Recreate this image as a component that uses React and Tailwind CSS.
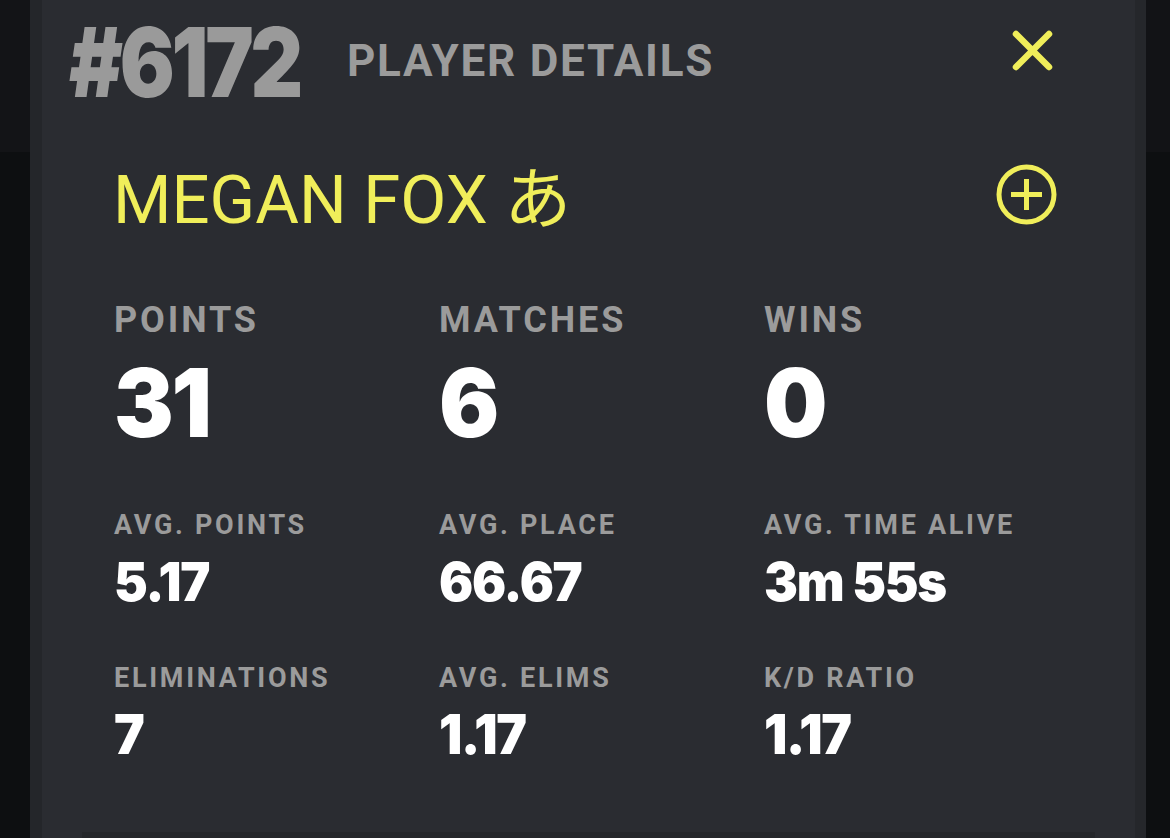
import React from 'react'

// player stats shown in the three-column grid
const STATS = [
  { label: 'POINTS', value: '31' },
  { label: 'MATCHES', value: '6' },
  { label: 'WINS', value: '0' },
  { label: 'AVG. POINTS', value: '5.17' },
  { label: 'AVG. PLACE', value: '66.67' },
  { label: 'AVG. TIME ALIVE', value: '3m 55s' },
  { label: 'ELIMINATIONS', value: '7' },
  { label: 'AVG. ELIMS', value: '1.17' },
  { label: 'K/D RATIO', value: '1.17' },
]

const roboto = "font-['Roboto','Liberation_Sans',sans-serif]"
const heavy = "font-['Inter','Roboto',sans-serif] font-black"

function CloseIcon() {
  return (
    <svg width="41" height="41" viewBox="0 0 41 41" fill="none">
      <path d="M4 4L37 37M37 4L4 37" stroke="#f0ee5a" strokeWidth="6.5" strokeLinecap="round" />
    </svg>
  )
}

function PlusCircleIcon() {
  return (
    <svg width="61" height="61" viewBox="0 0 61 61" fill="none">
      <circle cx="30.5" cy="30.5" r="27.5" stroke="#f0ee5a" strokeWidth="5" />
      <path d="M30.5 15V46M15 30.5H46" stroke="#f0ee5a" strokeWidth="5" />
    </svg>
  )
}

function StatRow({ items, labelClass, valueClass }) {
  return (
    <div className="grid grid-cols-[325px_325px_325px]">
      {items.map((s) => (
        <div key={s.label} className="flex flex-col items-start">
          <div className={`${roboto} font-bold text-[#9b9b9b] leading-none ${labelClass}`}>
            {s.label}
          </div>
          <div className={`${heavy} origin-left scale-x-[0.94] whitespace-nowrap text-white leading-none tracking-[-0.025em] ${valueClass}`}>
            {s.value}
          </div>
        </div>
      ))}
    </div>
  )
}

export default function App() {
  return (
    <div className="flex h-[838px] w-full overflow-hidden bg-[#0f1113]">
      {/* left backdrop */}
      <div className="flex w-[30px] flex-col">
        <div className="h-[152px] bg-[#131417]" />
        <div className="flex-1 bg-[#0d0f11]" />
      </div>
      <div className="w-[12px] bg-[#24262a]" />

      {/* player details panel */}
      <div className="flex w-[1093px] flex-col bg-[#2a2c31]">
        <div className="flex items-start pl-[27px] pt-[14px]">
          <div className={`${heavy} w-[278px] origin-left scale-x-[0.85] whitespace-nowrap text-[96px] leading-none tracking-[-0.04em] text-[#9a9a9a]`}>
            #6172
          </div>
          <div className={`${roboto} mt-[25px] text-[44px] font-bold leading-none tracking-[0.04em] text-[#9b9b9b]`}>
            PLAYER DETAILS
          </div>
          <div className="ml-auto mr-[82px] mt-[16px]">
            <CloseIcon />
          </div>
        </div>

        <div className="mt-[57px] flex items-start pl-[71px]">
          <div className="font-['Roboto','Noto_Sans_CJK_JP',sans-serif] text-[67px] leading-none text-[#f0ee5a]">
            MEGAN FOX あ
          </div>
          <div className="ml-auto mr-[78px] -mt-[3px]">
            <PlusCircleIcon />
          </div>
        </div>

        <div className="mt-[68px] flex flex-col pl-[72px]">
          <StatRow items={STATS.slice(0, 3)} labelClass="text-[36px] mb-[17px] tracking-[0.08em]" valueClass="text-[95px]" />
          <div className="mt-[62px]">
            <StatRow items={STATS.slice(3, 6)} labelClass="text-[27px] mb-[16px] tracking-[0.1em]" valueClass="text-[54px]" />
          </div>
          <div className="mt-[56px]">
            <StatRow items={STATS.slice(6, 9)} labelClass="text-[27px] mb-[15px] tracking-[0.1em]" valueClass="text-[55px]" />
          </div>
        </div>

        <div className="mx-[40px] mt-auto h-[6px] bg-[#25272b]" />
      </div>

      <div className="w-[11px] bg-[#25272b]" />
      <div className="flex flex-1 flex-col">
        <div className="h-[152px] bg-[#121316]" />
        <div className="flex-1 bg-[#0d0f11]" />
      </div>
    </div>
  )
}
